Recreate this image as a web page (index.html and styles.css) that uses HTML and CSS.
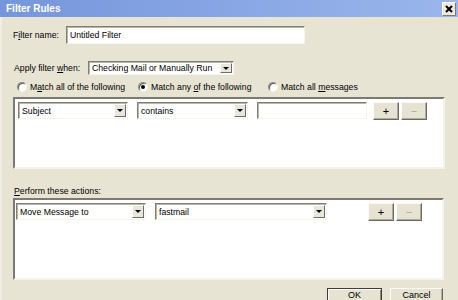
FILE: index.html
```html
<!DOCTYPE html>
<html lang="en">
<head>
    <meta charset="UTF-8">
    <title>Filter Rules</title>
    <link rel="stylesheet" href="styles.css">
</head>
<body>
<div class="dialog">
    <header class="titlebar">
        <span class="title">Filter Rules</span>
        <span class="close">
            <svg width="8" height="8" viewBox="0 0 8 8">
                <path d="M1 1 L7 7 M7 1 L1 7" stroke="#000" stroke-width="2" fill="none" />
            </svg>
        </span>
    </header>

    <main class="content">
        <!-- Nom du filtre -->
        <div class="row name-row">
            <label class="label name-label">F<u>i</u>lter name:</label>
            <div class="field name-field">Untitled Filter</div>
        </div>

        <div class="row when-row">
            <label class="label when-label">Apply filter <u>w</u>hen:</label>
            <div class="select when-select">
                <span class="value">Checking Mail or Manually Run</span>
                <span class="arrow"></span>
            </div>
        </div>

        <div class="radios">
            <div class="option"><span class="radio"></span><span>M<u>a</u>tch all of the following</span></div>
            <div class="option"><span class="radio checked"></span><span>Match any <u>o</u>f the following</span></div>
            <div class="option"><span class="radio"></span><span>Match all <u>m</u>essages</span></div>
        </div>

        <!-- Regles -->
        <div class="box rules">
            <div class="line">
                <div class="select subject">
                    <span class="value">Subject</span>
                    <span class="arrow"></span>
                </div>
                <div class="select operator">
                    <span class="value">contains</span>
                    <span class="arrow"></span>
                </div>
                <div class="field term"></div>
                <div class="btn small">+</div>
                <div class="btn small disabled">&minus;</div>
            </div>
        </div>

        <label class="label actions-label"><u>P</u>erform these actions:</label>

        <!-- Actions -->
        <div class="box actions">
            <div class="line">
                <div class="select action">
                    <span class="value">Move Message to</span>
                    <span class="arrow"></span>
                </div>
                <div class="select folder">
                    <span class="value">fastmail</span>
                    <span class="arrow"></span>
                </div>
                <div class="btn small add-action">+</div>
                <div class="btn small disabled">&minus;</div>
            </div>
        </div>

        <div class="footer">
            <div class="btn wide default">OK</div>
            <div class="btn wide cancel">Cancel</div>
        </div>
    </main>
</div>
</body>
</html>
```
FILE: styles.css
```css
body {
    margin: 0;
    width: 458px;
    height: 300px;
    overflow: hidden;
    background: #e8e4d3;
    font-family: "Liberation Sans", Arial, sans-serif;
    font-size: 8.7px;
    color: #000;
}

u {
    text-decoration: underline;
    text-underline-offset: 1px;
}

.dialog {
    display: flex;
    flex-direction: column;
}

.titlebar {
    height: 17px;
    display: flex;
    align-items: center;
    justify-content: space-between;
    padding: 0 2px 0 6px;
    background: linear-gradient(to right, #7696dc, #9ab6ec);
    color: white;
}

.title {
    font-weight: bold;
    font-size: 10px;
}

.close {
    width: 12px;
    height: 12px;
    display: flex;
    align-items: center;
    justify-content: center;
    background: #ebe9e0;
    border: 1px solid;
    border-color: #fff #7d7b70 #7d7b70 #fff;
}

.content {
    display: flex;
    flex-direction: column;
    padding: 0 13px 20px 11px;
    border-left: 2px solid #f1eee3;
}

.content > * {
    flex-shrink: 0;
}

.row {
    display: flex;
    align-items: center;
}

.name-row {
    margin-top: 9px;
}

.name-label {
    width: 53px;
}

.when-row {
    margin-top: 17px;
}

.when-label {
    width: 74px;
    padding-left: 1px;
}

/* champs */
.field, .select {
    box-sizing: border-box;
    background: white;
    border: 1px solid;
    border-color: #7f7d74 #f6f4ec #f6f4ec #7f7d74;
    box-shadow: inset 1px 1px #b9b6aa;
}

.field {
    display: flex;
    align-items: center;
    padding-left: 3px;
}

.name-field {
    width: 239px;
    height: 18px;
}

.select {
    display: flex;
    align-items: stretch;
}

.select .value {
    flex: 1;
    display: flex;
    align-items: center;
    padding-left: 3px;
    white-space: nowrap;
}

.arrow {
    width: 10px;
    margin: 1px;
    background: #e9e6dc;
    border: 1px solid;
    border-color: #fff #6f6d66 #6f6d66 #fff;
    display: flex;
    align-items: center;
    justify-content: center;
}

.arrow::after {
    content: "";
    border-left: 3px solid transparent;
    border-right: 3px solid transparent;
    border-top: 3px solid #000;
}

.when-select {
    width: 146px;
    height: 14px;
}

.radios {
    display: grid;
    grid-template-columns: 121px 130px auto;
    margin-top: 6px;
    padding-left: 4px;
    height: 12px;
    align-items: center;
}

.option {
    display: flex;
    align-items: center;
    white-space: nowrap;
}

.radio {
    box-sizing: border-box;
    width: 10px;
    height: 10px;
    margin-right: 3px;
    border-radius: 50%;
    background: white;
    border: 1px solid;
    border-color: #8d8b82 #f4f2ea #f4f2ea #8d8b82;
    box-shadow: inset 1px 1px #5d5b55;
    display: flex;
    align-items: center;
    justify-content: center;
}

.radio.checked::after {
    content: "";
    width: 4px;
    height: 4px;
    border-radius: 50%;
    background: #000;
}

/* listes */
.box {
    box-sizing: border-box;
    background: white;
    border: 2px solid;
    border-color: #7c7a72 #f5f3ea #f5f3ea #7c7a72;
    padding: 3px;
}

.rules {
    margin-top: 4px;
    width: 432px;
    height: 72px;
}

.actions {
    margin-top: 1px;
    width: 431px;
    height: 82px;
    padding-left: 1px;
}

.line {
    display: flex;
    align-items: center;
    height: 17px;
}

.subject {
    width: 110px;
    height: 17px;
}

.operator {
    width: 111px;
    height: 17px;
    margin-left: 9px;
}

.term {
    width: 110px;
    height: 17px;
    margin-left: 9px;
    margin-right: 6px;
}

.action {
    width: 130px;
    height: 17px;
}

.folder {
    width: 172px;
    height: 17px;
    margin-left: 9px;
    margin-right: 41px;
}

.actions-label {
    margin-top: 17px;
    padding-left: 1px;
    height: 11px;
    line-height: 11px;
}

/* boutons */
.btn {
    box-sizing: border-box;
    display: flex;
    align-items: center;
    justify-content: center;
    background: #e6e3d3;
    border: 1px solid;
    border-color: #fbfaf4 #6c6a62 #6c6a62 #fbfaf4;
    box-shadow: inset -1px -1px #aeab9e;
}

.btn.small {
    width: 26px;
    height: 18px;
    margin-right: 2px;
    font-size: 11px;
}

.btn.disabled {
    color: #aaa79b;
}

.footer {
    display: flex;
    justify-content: flex-end;
    margin-top: 8px;
    padding-right: 2px;
}

.btn.wide {
    height: 22px;
    font-size: 9px;
    line-height: 9px;
    align-items: flex-start;
    padding-top: 2px;
}

.btn.default {
    width: 55px;
    border-color: #3f3e3a;
    box-shadow: inset 1px 1px #fbfaf4, inset -1px -1px #8d8b80;
}

.btn.cancel {
    width: 53px;
    margin-left: 8px;
}
```
